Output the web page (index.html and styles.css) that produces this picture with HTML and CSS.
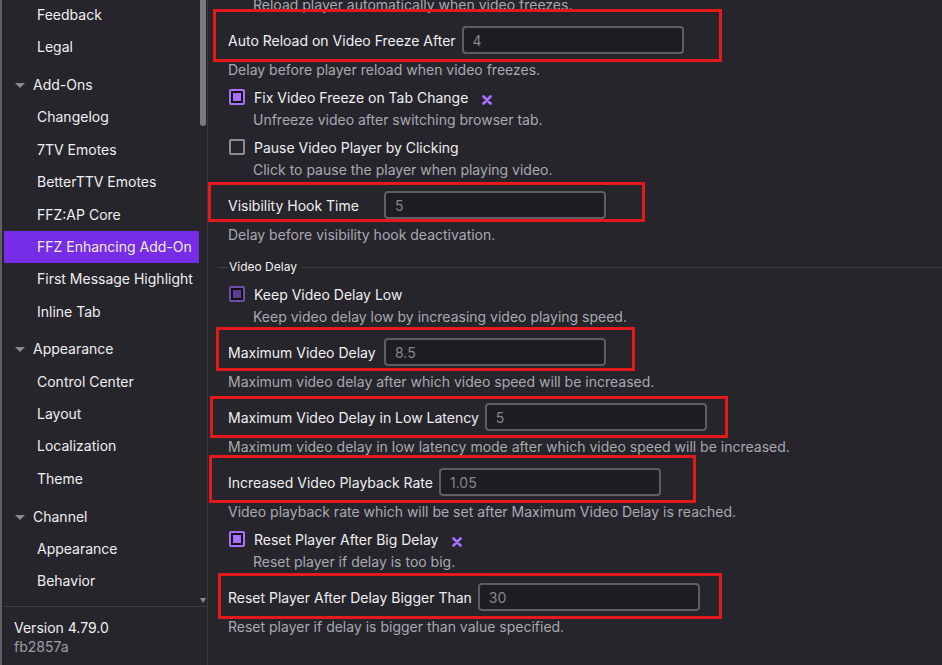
FILE: index.html
```html
<!DOCTYPE html>
<html>
<head>
<meta charset="utf-8">
<link rel="stylesheet" href="styles.css">
</head>
<body>
<div class="app">
  <aside class="sidebar">
    <nav class="nav">
      <div class="item child">Feedback</div>
      <div class="item child">Legal</div>
      <div class="item parent"><span class="tri"></span>Add-Ons</div>
      <div class="item child">Changelog</div>
      <div class="item child">7TV Emotes</div>
      <div class="item child">BetterTTV Emotes</div>
      <div class="item child">FFZ:AP Core</div>
      <div class="item child active">FFZ Enhancing Add-On</div>
      <div class="item child">First Message Highlight</div>
      <div class="item child">Inline Tab</div>
      <div class="item parent"><span class="tri"></span>Appearance</div>
      <div class="item child">Control Center</div>
      <div class="item child">Layout</div>
      <div class="item child">Localization</div>
      <div class="item child">Theme</div>
      <div class="item parent"><span class="tri"></span>Channel</div>
      <div class="item child">Appearance</div>
      <div class="item child">Behavior</div>
      <div class="thumb"></div>
      <div class="scroll-down"></div>
    </nav>
    <div class="footer">
      <div class="version">Version 4.79.0</div>
      <div class="hash">fb2857a</div>
    </div>
  </aside>

  <main class="main">
    <div class="settings">
      <div class="desc indent first">Reload player automatically when video freezes.</div>

      <div class="block field">
        <div class="row"><label class="flabel">Auto Reload on Video Freeze After</label><input class="inp" type="text" placeholder="4"></div>
        <div class="desc">Delay before player reload when video freezes.</div>
      </div>

      <div class="block">
        <div class="row"><span class="cb on"></span><span class="clabel">Fix Video Freeze on Tab Change</span><svg class="xi" width="10" height="10" viewBox="0 0 10 10"><path d="M1.5 1.5 L8.5 8.5 M8.5 1.5 L1.5 8.5" stroke="#a970ff" stroke-width="2.6" stroke-linecap="round"/></svg></div>
        <div class="desc indent">Unfreeze video after switching browser tab.</div>
      </div>

      <div class="block">
        <div class="row"><span class="cb"></span><span class="clabel">Pause Video Player by Clicking</span></div>
        <div class="desc indent">Click to pause the player when playing video.</div>
      </div>

      <div class="block field">
        <div class="row"><label class="flabel">Visibility Hook Time</label><input class="inp" type="text" placeholder="5"></div>
        <div class="desc">Delay before visibility hook deactivation.</div>
      </div>

      <div class="section"><span class="sline short"></span><span class="stitle">Video Delay</span><span class="sline"></span></div>

      <div class="block">
        <div class="row"><span class="cb on dim"></span><span class="clabel">Keep Video Delay Low</span></div>
        <div class="desc indent">Keep video delay low by increasing video playing speed.</div>
      </div>

      <div class="block field">
        <div class="row"><label class="flabel">Maximum Video Delay</label><input class="inp" type="text" placeholder="8.5"></div>
        <div class="desc">Maximum video delay after which video speed will be increased.</div>
      </div>

      <div class="block field">
        <div class="row"><label class="flabel">Maximum Video Delay in Low Latency</label><input class="inp" type="text" placeholder="5"></div>
        <div class="desc">Maximum video delay in low latency mode after which video speed will be increased.</div>
      </div>

      <div class="block field">
        <div class="row"><label class="flabel">Increased Video Playback Rate</label><input class="inp" type="text" placeholder="1.05"></div>
        <div class="desc">Video playback rate which will be set after Maximum Video Delay is reached.</div>
      </div>

      <div class="block">
        <div class="row"><span class="cb on"></span><span class="clabel">Reset Player After Big Delay</span><svg class="xi" width="10" height="10" viewBox="0 0 10 10"><path d="M1.5 1.5 L8.5 8.5 M8.5 1.5 L1.5 8.5" stroke="#a970ff" stroke-width="2.6" stroke-linecap="round"/></svg></div>
        <div class="desc indent">Reset player if delay is too big.</div>
      </div>

      <div class="block field">
        <div class="row"><label class="flabel">Reset Player After Delay Bigger Than</label><input class="inp" type="text" placeholder="30"></div>
        <div class="desc">Reset player if delay is bigger than value specified.</div>
      </div>
    </div>

    <div class="mark m1"></div>
    <div class="mark m2"></div>
    <div class="mark m3"></div>
    <div class="mark m4"></div>
    <div class="mark m5"></div>
    <div class="mark m6"></div>
  </main>
</div>
</body>
</html>
```

FILE: styles.css
```css
* { box-sizing: border-box; }
html, body { margin: 0; padding: 0; }
body {
  width: 942px;
  height: 665px;
  overflow: hidden;
  background: #26252b;
  font-family: Inter, "Noto Sans", sans-serif;
  font-size: 14px;
  color: #efeff1;
}
.app {
  display: flex;
  height: 665px;
}
.sidebar {
  width: 208px;
  flex: none;
  display: flex;
  flex-direction: column;
  border-left: 2px solid #5f5f65;
  border-right: 1px solid #3a3a40;
  background: #26252b;
}
.nav {
  position: relative;
  flex: 1;
  overflow: hidden;
  padding: 0 8px 0 2px;
}
.item {
  height: 32.4px;
  line-height: 32px;
  white-space: nowrap;
  color: #efeff1;
}
.item:first-child { margin-top: -1px; }
.child { padding-left: 33px; }
.parent {
  margin-top: 5.2px;
  padding-left: 11px;
  display: flex;
  align-items: center;
}
.tri {
  width: 0;
  height: 0;
  border-left: 5px solid transparent;
  border-right: 5px solid transparent;
  border-top: 5px solid #8a8a90;
  margin-right: 8px;
  margin-top: 1px;
}
.active { background: #772ce8; }
.thumb {
  position: absolute;
  right: 1px;
  top: 0;
  width: 6px;
  height: 126px;
  background: #7a7a80;
  border-radius: 0 0 3px 3px;
}
.scroll-down {
  position: absolute;
  right: 1px;
  bottom: 3px;
  width: 0;
  height: 0;
  border-left: 3.5px solid transparent;
  border-right: 3.5px solid transparent;
  border-top: 5px solid #8a8a90;
}
.footer {
  margin-left: 2px;
  height: 59px;
  border-top: 1px solid #3e3e44;
  padding: 11px 0 0 10px;
  line-height: 19px;
}
.version { color: #efeff1; }
.hash { color: #9e9ea6; }

.main {
  position: relative;
  flex: 1;
  overflow: hidden;
}
.settings {
  display: flex;
  flex-direction: column;
  gap: 7px;
  padding-left: 20px;
}
.desc {
  line-height: 20px;
  color: #a9a9b1;
  white-space: nowrap;
}
.desc.first { margin-top: -5px; }
.indent { padding-left: 25px; }
.block { display: flex; flex-direction: column; gap: 3px; }
.field { padding-top: 4px; gap: 6px; }
.row {
  display: flex;
  align-items: center;
  min-height: 20px;
  white-space: nowrap;
}
.flabel {
  min-width: 150px;
  margin-right: 6px;
  color: #efeff1;
}
.inp {
  width: 222px;
  height: 28px;
  border: 2px solid #5d5d63;
  border-radius: 4px;
  background: #1e1d22;
  color: #efeff1;
  font-family: Inter, "Noto Sans", sans-serif;
  font-size: 14px;
  padding: 0 9px;
  outline: none;
}
.inp::placeholder { color: #85858c; }
.cb {
  width: 16px;
  height: 16px;
  flex: none;
  margin-left: 1px;
  margin-right: 9px;
  border: 2px solid #8c8c92;
  border-radius: 2px;
}
.cb.on {
  border-color: #a970ff;
  background: #a970ff;
  box-shadow: inset 0 0 0 2px #111014;
}
.cb.on.dim {
  border-color: #6e4ea8;
  background: #5b3f8e;
}
.clabel { color: #efeff1; }
.xi { margin-left: 14px; margin-top: 6px; }
.section {
  display: flex;
  align-items: center;
  margin: 7px 0 2px -10px;
  height: 16px;
}
.sline {
  flex: 1;
  height: 1px;
  background: #3e3e44;
}
.sline.short { flex: none; width: 10px; }
.stitle {
  font-size: 12px;
  line-height: 16px;
  color: #efeff1;
  padding: 0 5px 0 1px;
}

.mark {
  position: absolute;
  border: 3px solid #e3191c;
  pointer-events: none;
}
.m1 { left: 5px; top: 9px; width: 509px; height: 53px; }
.m2 { left: 0px; top: 182px; width: 437px; height: 40px; }
.m3 { left: 8px; top: 327px; width: 419px; height: 44px; }
.m4 { left: 2px; top: 396px; width: 518px; height: 42px; }
.m5 { left: 1px; top: 455px; width: 487px; height: 48px; }
.m6 { left: 10px; top: 573px; width: 504px; height: 46px; }
```
